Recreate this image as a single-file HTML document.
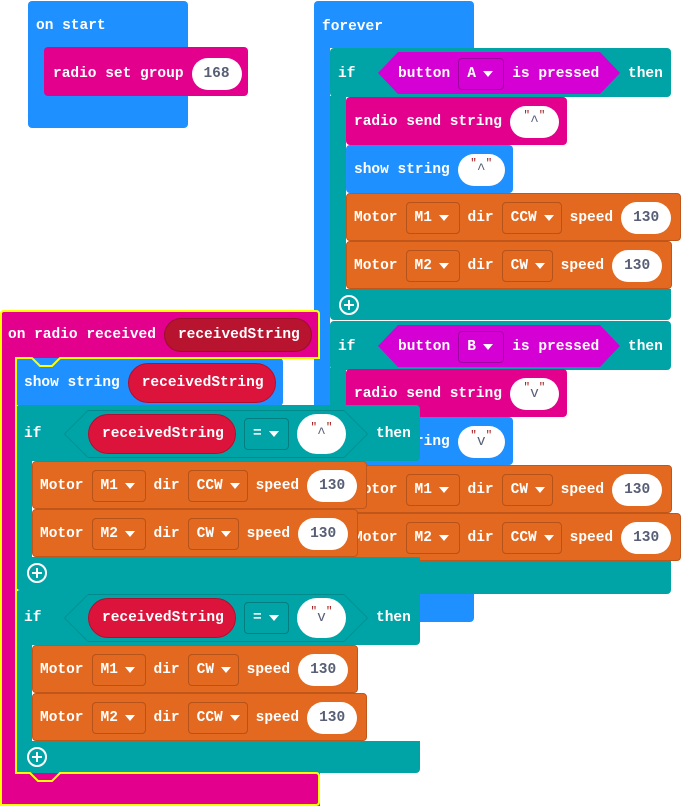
<!DOCTYPE html>
<html><head><meta charset="utf-8"><style>
body{margin:0;width:681px;height:806px;background:#fff;position:relative;overflow:hidden;font:bold 14.5px "Liberation Mono","DejaVu Sans Mono",monospace;color:#fff}
.r{position:absolute}
.blue{background:#1e90ff}.mag{background:#e3008c}.teal{background:#00a4a6}.org{background:#e2691f;border:1px solid #c0561a;box-sizing:border-box}
.row{position:absolute;display:flex;align-items:center;gap:8px;white-space:nowrap}
.dd{display:flex;align-items:center;height:32px;padding:0 8px;border-radius:4px;box-sizing:border-box}
.dd i{display:inline-block;width:0;height:0;border-left:5px solid transparent;border-right:5px solid transparent;border-top:6px solid #fff;margin-left:7px}
.do{border:1px solid #b5531a;background:#e2691f}
.dt{border:1px solid #007e80;background:#00a4a6}
.dp{border:1px solid #a000a0;background:#d400d4}
.pill{background:#fff;color:#575e75;height:32px;border-radius:16px;display:flex;align-items:center;justify-content:center;padding:0 12px;box-sizing:border-box}
.str{background:#fff;color:#575e75;height:32px;width:49px;border-radius:16px;display:flex;align-items:center;justify-content:center;box-sizing:border-box;font-weight:normal}
.str b{color:#a31515;font-weight:normal;font-size:11px;position:relative;top:-6px}
.var{background:#dc143c;border:1px solid #b01030;height:40px;border-radius:20px;display:flex;align-items:center;padding:0 13px;box-sizing:border-box}
.plus{position:absolute;width:16px;height:16px;border:2px solid #fff;border-radius:50%}
.plus:before{content:"";position:absolute;left:3px;top:7px;width:10px;height:2px;background:#fff}
.plus:after{content:"";position:absolute;left:7px;top:3px;width:2px;height:10px;background:#fff}
</style></head><body>

<!-- on start -->
<div class="r blue" style="left:28px;top:1px;width:160px;height:127px;border-radius:4px"></div>
<div class="row" style="left:36px;top:12px;height:28px">on start</div>
<div class="r mag" style="left:44px;top:47px;width:204px;height:49px;border-radius:4px"></div>
<div class="row" style="left:53px;top:58px;height:32px">radio set group <span class="pill" style="width:50px;padding:0">168</span></div>

<!-- forever -->
<div class="r blue" style="left:314px;top:1px;width:160px;height:47px;border-radius:4px 4px 0 0"></div>
<div class="r blue" style="left:314px;top:48px;width:16px;height:560px"></div>
<div class="r blue" style="left:314px;top:594px;width:160px;height:28px;border-radius:0 0 4px 4px"></div>
<div class="row" style="left:322px;top:13px;height:28px">forever</div>

<!-- if A -->
<div class="r teal" style="left:330px;top:48px;width:341px;height:49px;border-radius:4px"></div>
<div class="r teal" style="left:330px;top:96px;width:16px;height:200px"></div>
<div class="r teal" style="left:330px;top:289px;width:341px;height:31px;border-radius:0 0 4px 4px"></div>
<div class="row" style="left:338px;top:58px;height:32px">if</div>
<div class="r" style="left:378px;top:52px;width:242px;height:42px;background:#d400d4;clip-path:polygon(20px 0,222px 0,242px 21px,222px 42px,20px 42px,0 21px)"></div>
<div class="row" style="left:398px;top:58px;height:32px">button <span class="dd dp" style="width:46px">A<i></i></span> is pressed</div>
<div class="row" style="left:628px;top:58px;height:32px">then</div>
<div class="r mag" style="left:346px;top:97px;width:221px;height:48px;border-radius:4px"></div>
<div class="row" style="left:354px;top:106px;height:32px">radio send string <span class="str"><b>"</b>^<b>"</b></span></div>
<div class="r blue" style="left:346px;top:145px;width:167px;height:48px;border-radius:4px"></div>
<div class="row" style="left:354px;top:154px;height:32px">show string <span class="str" style="width:47px"><b>"</b>^<b>"</b></span></div>
<div class="r org" style="left:346px;top:193px;width:335px;height:48px;border-radius:4px"></div>
<div class="row" style="left:354px;top:202px;height:32px">Motor <span class="dd do" style="width:54px">M1<i></i></span> dir <span class="dd do" style="width:60px">CCW<i></i></span> speed <span class="pill" style="width:50px;padding:0">130</span></div>
<div class="r org" style="left:346px;top:241px;width:326px;height:48px;border-radius:4px"></div>
<div class="row" style="left:354px;top:250px;height:32px">Motor <span class="dd do" style="width:54px">M2<i></i></span> dir <span class="dd do" style="width:51px">CW<i></i></span> speed <span class="pill" style="width:50px;padding:0">130</span></div>
<div class="plus" style="left:339px;top:295px"></div>

<!-- if B -->
<div class="r teal" style="left:330px;top:321px;width:341px;height:49px;border-radius:4px"></div>
<div class="r teal" style="left:330px;top:368px;width:16px;height:200px"></div>
<div class="r teal" style="left:330px;top:561px;width:341px;height:33px;border-radius:0 0 4px 4px"></div>
<div class="row" style="left:338px;top:331px;height:32px">if</div>
<div class="r" style="left:378px;top:325px;width:242px;height:42px;background:#d400d4;clip-path:polygon(20px 0,222px 0,242px 21px,222px 42px,20px 42px,0 21px)"></div>
<div class="row" style="left:398px;top:331px;height:32px">button <span class="dd dp" style="width:46px">B<i></i></span> is pressed</div>
<div class="row" style="left:628px;top:331px;height:32px">then</div>
<div class="r mag" style="left:346px;top:369px;width:221px;height:48px;border-radius:4px"></div>
<div class="row" style="left:354px;top:378px;height:32px">radio send string <span class="str"><b>"</b>v<b>"</b></span></div>
<div class="r blue" style="left:346px;top:417px;width:167px;height:48px;border-radius:4px"></div>
<div class="row" style="left:354px;top:426px;height:32px">show string <span class="str" style="width:47px"><b>"</b>v<b>"</b></span></div>
<div class="r org" style="left:346px;top:465px;width:326px;height:48px;border-radius:4px"></div>
<div class="row" style="left:354px;top:474px;height:32px">Motor <span class="dd do" style="width:54px">M1<i></i></span> dir <span class="dd do" style="width:51px">CW<i></i></span> speed <span class="pill" style="width:50px;padding:0">130</span></div>
<div class="r org" style="left:346px;top:513px;width:335px;height:48px;border-radius:4px"></div>
<div class="row" style="left:354px;top:522px;height:32px">Motor <span class="dd do" style="width:54px">M2<i></i></span> dir <span class="dd do" style="width:60px">CCW<i></i></span> speed <span class="pill" style="width:50px;padding:0">130</span></div>

<!-- on radio received -->
<div class="r mag" style="left:0;top:311px;width:320px;height:47px;border-radius:4px 4px 0 0"></div>
<div class="r mag" style="left:0;top:358px;width:16px;height:420px"></div>
<div class="r mag" style="left:0;top:773px;width:320px;height:33px"></div>
<div class="row" style="left:8px;top:319px;height:32px">on radio received <span class="var" style="background:#b8132f;border-color:#9a0f27;height:34px;border-radius:17px;width:148px">receivedString</span></div>

<div class="r blue" style="left:16px;top:358px;width:267px;height:48px;border-radius:4px"></div>
<div class="row" style="left:24px;top:363px;height:40px">show string <span class="var" style="width:148px">receivedString</span></div>

<!-- if ^ -->
<div class="r teal" style="left:16px;top:405px;width:404px;height:56px;border-radius:4px"></div>
<div class="r teal" style="left:16px;top:460px;width:16px;height:100px"></div>
<div class="r teal" style="left:16px;top:557px;width:404px;height:33px;border-radius:0 0 4px 4px"></div>
<div class="r" style="left:64px;top:410px;width:304px;height:48px;background:#008a8c;clip-path:polygon(24px 0,280px 0,304px 24px,280px 48px,24px 48px,0 24px)"></div>
<div class="r" style="left:65px;top:411px;width:302px;height:46px;background:#00a4a6;clip-path:polygon(23px 0,279px 0,302px 23px,279px 46px,23px 46px,0 23px)"></div>
<div class="row" style="left:24px;top:418px;height:32px">if</div>
<div class="row" style="left:88px;top:414px;height:40px"><span class="var" style="width:148px">receivedString</span><span class="dd dt" style="width:45px">=<i></i></span><span class="str" style="width:49px;height:40px;border-radius:20px"><b>"</b>^<b>"</b></span></div>
<div class="row" style="left:376px;top:418px;height:32px">then</div>
<div class="r org" style="left:32px;top:461px;width:335px;height:48px;border-radius:4px"></div>
<div class="row" style="left:40px;top:470px;height:32px">Motor <span class="dd do" style="width:54px">M1<i></i></span> dir <span class="dd do" style="width:60px">CCW<i></i></span> speed <span class="pill" style="width:50px;padding:0">130</span></div>
<div class="r org" style="left:32px;top:509px;width:326px;height:48px;border-radius:4px"></div>
<div class="row" style="left:40px;top:518px;height:32px">Motor <span class="dd do" style="width:54px">M2<i></i></span> dir <span class="dd do" style="width:51px">CW<i></i></span> speed <span class="pill" style="width:50px;padding:0">130</span></div>
<div class="plus" style="left:27px;top:563px"></div>

<!-- if v -->
<div class="r teal" style="left:16px;top:590px;width:404px;height:55px;border-radius:4px"></div>
<div class="r teal" style="left:16px;top:644px;width:16px;height:100px"></div>
<div class="r teal" style="left:16px;top:741px;width:404px;height:32px;border-radius:0 0 4px 4px"></div>
<div class="r" style="left:64px;top:594px;width:304px;height:48px;background:#008a8c;clip-path:polygon(24px 0,280px 0,304px 24px,280px 48px,24px 48px,0 24px)"></div>
<div class="r" style="left:65px;top:595px;width:302px;height:46px;background:#00a4a6;clip-path:polygon(23px 0,279px 0,302px 23px,279px 46px,23px 46px,0 23px)"></div>
<div class="row" style="left:24px;top:602px;height:32px">if</div>
<div class="row" style="left:88px;top:598px;height:40px"><span class="var" style="width:148px">receivedString</span><span class="dd dt" style="width:45px">=<i></i></span><span class="str" style="width:49px;height:40px;border-radius:20px"><b>"</b>v<b>"</b></span></div>
<div class="row" style="left:376px;top:602px;height:32px">then</div>
<div class="r org" style="left:32px;top:645px;width:326px;height:48px;border-radius:4px"></div>
<div class="row" style="left:40px;top:654px;height:32px">Motor <span class="dd do" style="width:54px">M1<i></i></span> dir <span class="dd do" style="width:51px">CW<i></i></span> speed <span class="pill" style="width:50px;padding:0">130</span></div>
<div class="r org" style="left:32px;top:693px;width:335px;height:48px;border-radius:4px"></div>
<div class="row" style="left:40px;top:702px;height:32px">Motor <span class="dd do" style="width:54px">M2<i></i></span> dir <span class="dd do" style="width:60px">CCW<i></i></span> speed <span class="pill" style="width:50px;padding:0">130</span></div>
<div class="plus" style="left:27px;top:747px"></div>

<svg class="r" style="left:0;top:0" width="681" height="806"><path d="M1,314 Q1,311 4,311 H316 Q319,311 319,314 V358 H60 L52,366 H40 L32,358 H16 V773 H30 L38,781 H52 L60,773 H316 Q319,773 319,776 V802 Q319,805 316,805 H1 Z" fill="none" stroke="#ffff00" stroke-width="2"/></svg>
</body></html>
